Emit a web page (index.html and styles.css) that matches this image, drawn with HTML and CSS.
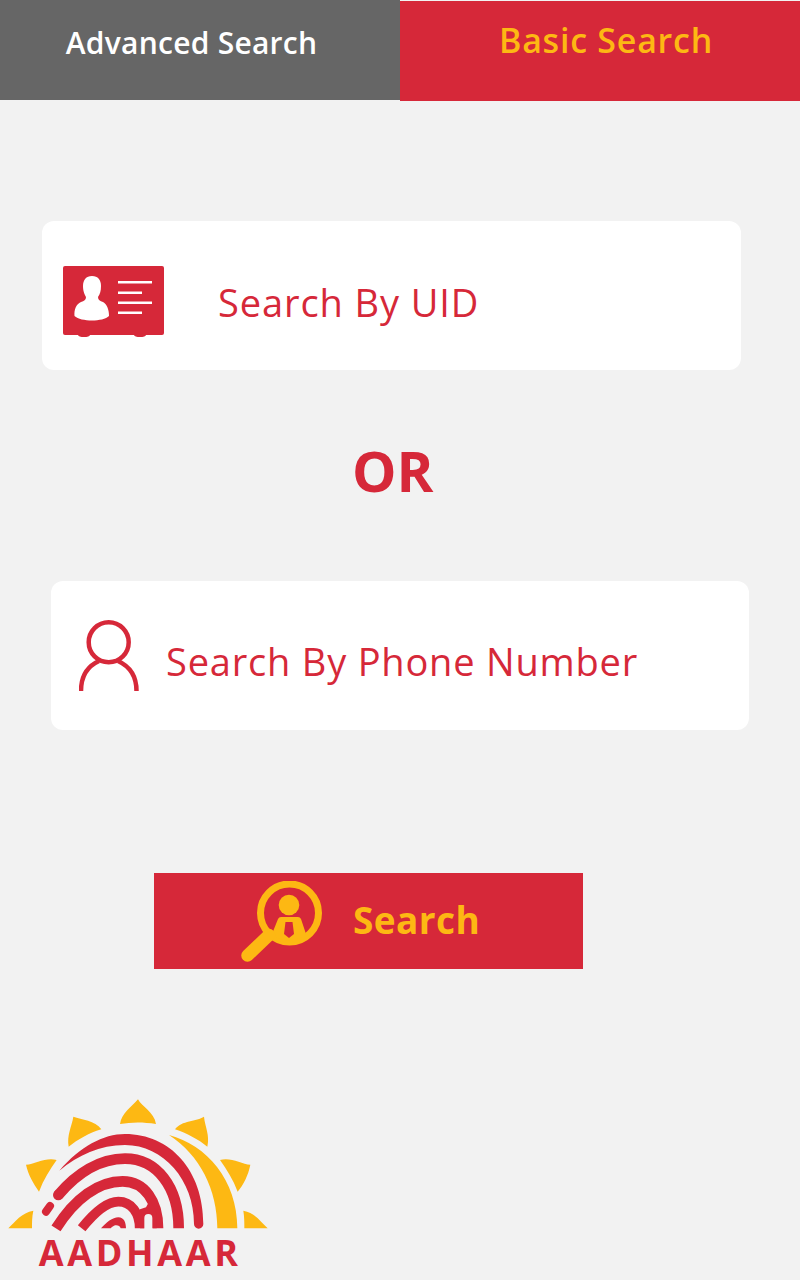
FILE: index.html
```html
<!DOCTYPE html>
<html lang="en">
<head>
<meta charset="utf-8">
<title>Aadhaar Search</title>
<link rel="stylesheet" href="styles.css">
</head>
<body>
<nav class="tabs">
  <div class="tab tab-advanced">Advanced Search</div>
  <div class="tab tab-basic">Basic Search</div>
</nav>
<main>
  <div class="card card-uid">
    <svg class="icon-id" viewBox="0 0 101 71">
      <rect x="0" y="0" width="101" height="69" rx="2" fill="#d62839"/>
      <ellipse cx="21" cy="69" rx="6" ry="2" fill="#d62839"/>
      <ellipse cx="77" cy="69" rx="6" ry="2" fill="#d62839"/>
      <path d="M29 10C23 10 20 14 20 20C20 26 22 29 23 31C23 34 21 35 18 36C13 38 11 44 11.500 50C18 56 40 56 46 50C46 44 44 38 40 36C37 35 35 34 35 31C37 28 38 25 38 20C38 14 35 10 29 10Z" fill="#fff"/>
      <path d="M55 16.300H89M55 26.700H79M55 36.700H89M55 46.700H79" stroke="#fff" stroke-width="2.600" fill="none"/>
    </svg>
    <span class="card-label label-uid">Search By UID</span>
  </div>
  <div class="or">OR</div>
  <div class="card card-phone">
    <svg class="icon-user" viewBox="0 0 60 71" fill="none" stroke="#d62839" stroke-width="4.500">
      <circle cx="29.700" cy="22.300" r="20"/>
      <path d="M2 71C2 55 9 46 20 41M57.500 71C57.500 55 50 46 39 41"/>
    </svg>
    <span class="card-label label-phone">Search By Phone Number</span>
  </div>
  <button class="search-btn" type="button">
    <svg class="icon-search" viewBox="0 0 81 81">
      <circle cx="48.500" cy="32" r="29" fill="none" stroke="#fdb813" stroke-width="7"/>
      <circle cx="48" cy="24" r="10.300" fill="#fdb813"/>
      <path d="M31 53L37 38Q38 36 40 36H57Q59 36 60 38L65 53Q48 66 31 53Z" fill="#fdb813"/>
      <path d="M44.500 41H51.500L53 53L48 57L43 53Z" fill="#d62839"/>
      <path d="M6.500 74.500L28 54" stroke="#fdb813" stroke-width="12.500" stroke-linecap="round"/>
    </svg>
    <span class="search-text">Search</span>
  </button>
  <svg class="logo" viewBox="0 0 840 570">
    <g fill="#fdb813">
      <path d="M360 102C365 70 395 50 414 28C425 50 462 65 468 102C430 96 395 96 360 102Z"/>
      <path d="M206 170C200 135 215 110 220 80C245 90 285 90 304 118C265 130 235 148 206 170Z"/>
      <path d="M525 118C545 90 590 95 612 80C615 110 630 135 622 170C595 148 560 130 525 118Z"/>
      <path d="M117 305C100 280 85 255 78 224C105 222 140 200 170 210C150 238 130 270 117 305Z"/>
      <path d="M713 305C700 270 680 238 660 210C690 200 725 222 751 224C745 255 730 285 713 305Z"/>
      <path d="M25 415C45 395 65 368 100 362C96 380 96 398 96 415Z"/>
      <path d="M730 362C765 368 782 395 803 415H733C733 398 733 380 730 362Z"/>
      <path d="M507 135C620 165 712 270 712 415H652C652 300 600 195 507 135Z"/>
    </g>
    <g fill="none" stroke="#d62839">
      <path d="M178 242C240 170 310 132 375 132C510 132 610 240 610 402A14 14 0 0 1 582 402C582 270 490 165 375 165C300 165 235 195 178 242Z" fill="#d62839" stroke="none"/>
      <path d="M175 315C230 250 300 206 375 206C470 206 536 290 536 415" stroke-width="32"/>
      <circle cx="175" cy="315" r="16" fill="#d62839" stroke="none"/>
      <path d="M168 415C225 325 295 274 368 274C435 274 474 335 474 415" stroke-width="32"/>
      <path d="M245 415C285 365 320 335 355 335C395 335 419 370 419 415" stroke-width="29"/>
      <path d="M420 358L438 352L450 330L470 370V415H420Z" fill="#d62839" stroke="none"/>
      <path d="M445 420V384" stroke="#f2f2f2" stroke-width="24" stroke-linecap="round"/>
      <path d="M138 365L150 348" stroke-width="24" stroke-linecap="round"/>
      <path d="M303 415C318 398 338 382 355 382C372 382 378 398 378 415H362C360 408 352 404 342 407Q335 410 332 415Z" fill="#d62839" stroke="none"/>
    </g>
    <text class="logo-text" x="116" y="528">AADHAAR</text>
  </svg>
</main>
</body>
</html>
```
FILE: styles.css
```css
* {
  box-sizing: border-box;
}

body {
  margin: 0;
  background: #f2f2f2;
  font-family: "Open Sans", "Noto Sans", sans-serif;
  height: 1280px;
  overflow: hidden;
}

.tabs {
  display: flex;
  align-items: flex-start;
}

.tab {
  width: 400px;
  height: 100px;
  display: flex;
  justify-content: center;
  font-weight: 600;
}

.tab-advanced {
  background: #666666;
  color: #ffffff;
  padding: 22px 17px 0 0;
  font-size: 30px;
  letter-spacing: 0.25px;
}

.tab-basic {
  margin-top: 1px;
  background: #d62839;
  color: #fdb813;
  padding: 16px 0 0 12px;
  font-size: 34px;
  letter-spacing: 0.75px;
}

.card {
  height: 149px;
  background: #ffffff;
  border-radius: 12px;
  display: flex;
  align-items: center;
}

.card-uid {
  width: 699px;
  margin: 120px 0 0 42px;
  padding-left: 21px;
  gap: 54px;
}

.card-phone {
  width: 698px;
  margin: 0 0 0 51px;
  padding-left: 28px;
  gap: 27px;
}

.icon-id {
  width: 101px;
  height: 71px;
  margin-top: 12px;
}

.icon-user {
  width: 60px;
  height: 71px;
}

.card-label {
  color: #d62839;
  font-size: 38px;
  line-height: 50px;
}

.label-uid {
  margin-top: 12px;
  letter-spacing: 0.9px;
}

.label-phone {
  margin-top: 10px;
  letter-spacing: 0.8px;
}

.or {
  height: 211px;
  padding: 64px 0 0 352px;
  color: #d62839;
  font-size: 56px;
  font-weight: 700;
  line-height: 72px;
}

.search-btn {
  display: flex;
  align-items: center;
  gap: 31px;
  width: 429px;
  height: 96px;
  margin: 143px 0 0 154px;
  padding: 0 0 0 87px;
  border: 0;
  background: #d62839;
  font-family: inherit;
}

.icon-search {
  width: 81px;
  height: 81px;
}

.search-text {
  margin-bottom: 4px;
  color: #fdb813;
  font-size: 37px;
  font-weight: 700;
  letter-spacing: 0.4px;
}

.logo {
  display: block;
  width: 280px;
  height: 190px;
  margin-top: 121px;
}

.logo-text {
  fill: #d62839;
  font-size: 108px;
  font-weight: 700;
  letter-spacing: 11px;
  font-family: "Open Sans", sans-serif;
}
```
